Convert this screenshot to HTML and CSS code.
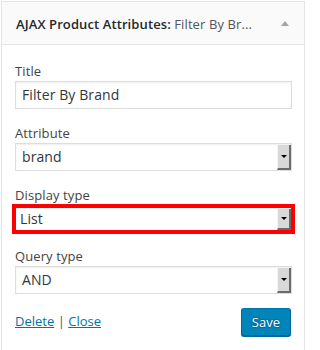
FILE: index.html
```html
<!DOCTYPE html>
<html>
<head>
<meta charset="utf-8">
<link rel="stylesheet" href="styles.css">
</head>
<body>
<div class="widget">
  <div class="widget-top">
    <h3 class="widget-title">AJAX Product Attributes<span class="colon">:</span> <span class="in-title">Filter By Br...</span></h3>
    <span class="toggle"></span>
  </div>
  <div class="widget-inside">
    <div class="field">
      <label class="label">Title</label>
      <div class="input">Filter By Brand</div>
    </div>
    <div class="field">
      <label class="label">Attribute</label>
      <div class="select"><span class="value">brand</span><span class="arrow"></span></div>
    </div>
    <div class="field">
      <label class="label">Display type</label>
      <div class="select highlight"><span class="value">List</span><span class="arrow"></span></div>
    </div>
    <div class="field">
      <label class="label">Query type</label>
      <div class="select"><span class="value">AND</span><span class="arrow"></span></div>
    </div>
    <div class="actions">
      <div class="links"><a href="#" class="link">Delete</a> <span class="sep">|</span> <a href="#" class="link">Close</a></div>
      <button class="save">Save</button>
    </div>
  </div>
</div>
</body>
</html>
```
FILE: styles.css
```css
html, body {
  margin: 0;
  padding: 0;
  background: #ffffff;
}
body {
  font-family: "Open Sans", "Liberation Sans", sans-serif;
  font-size: 13px;
  color: #444;
}
.widget {
  width: 302px;
  margin: 1px 0 0 1px;
  border: 1px solid #e5e5e5;
  border-bottom: none;
  box-shadow: 0 1px 1px rgba(0,0,0,.04);
  background: #fff;
  height: 360px;
}
.widget-top {
  height: 42px;
  background: #fafafa;
  border-bottom: 1px solid #e5e5e5;
  display: flex;
  align-items: center;
  justify-content: space-between;
  padding: 0 14px 0 14px;
}
.widget-title {
  margin: 0;
  font-size: 13px;
  font-weight: 600;
  color: #23282d;
  line-height: 18px;
  white-space: nowrap;
  letter-spacing: 0.1px;
  position: relative;
  top: 1px;
}
.in-title {
  font-weight: 400;
  color: #555;
}
.toggle {
  width: 0;
  height: 0;
  border-left: 4px solid transparent;
  border-right: 4px solid transparent;
  border-bottom: 5px solid #a0a5aa;
  margin-right: 1px;
}
.widget-inside {
  padding: 17px 12px 0 13px;
}
.field {
  display: flex;
  flex-direction: column;
  margin-bottom: 15px;
}
.label {
  line-height: 18px;
  margin-bottom: 1px;
  color: #444;
  letter-spacing: 0.1px;
}
.input {
  height: 28px;
  box-sizing: border-box;
  border: 1px solid #ddd;
  box-shadow: inset 0 1px 2px rgba(0,0,0,.07);
  font-size: 14px;
  line-height: 26px;
  padding: 0 6px;
  color: #32373c;
  letter-spacing: 0.1px;
}
.select {
  height: 28px;
  box-sizing: border-box;
  border: 1px solid #ddd;
  display: flex;
  align-items: stretch;
  box-shadow: inset 0 1px 2px rgba(0,0,0,.07);
}
.select.highlight {
  border: 4px solid #ff0000;
  height: 30px;
  margin: -1px -3px -2px -3px;
  padding: 0;
}
.select .value {
  flex: 1;
  font-size: 14px;
  line-height: 26px;
  padding: 0 6px;
  color: #32373c;
  letter-spacing: 0.1px;
}
.select.highlight .value {
  line-height: 22px;
  padding: 0 4px;
}
.arrow {
  width: 11px;
  margin: 1px 0 0 0;
  background: #d9d9d9;
  border-left: 1px solid #f4f4f4;
  border-right: 2px solid #6b6b6b;
  border-bottom: 2px solid #6b6b6b;
  position: relative;
}
.arrow::after {
  content: "";
  position: absolute;
  left: 3px;
  top: 50%;
  margin-top: -2px;
  border-left: 3px solid transparent;
  border-right: 3px solid transparent;
  border-top: 3px solid #000;
}
.actions {
  display: flex;
  justify-content: space-between;
  align-items: flex-start;
  margin-top: -1px;
}
.links {
  line-height: 18px;
  padding-top: 4px;
}
.link {
  color: #0073aa;
  text-decoration: underline;
}
.sep {
  color: #555;
}
.save {
  font-family: "Open Sans", "Liberation Sans", sans-serif;
  font-size: 13px;
  height: 28px;
  line-height: 26px;
  padding: 0 10px 2px;
  margin-right: 1px;
  background: #0085ba;
  border: 1px solid #0073aa;
  border-color: #0073aa #006799 #006799;
  border-radius: 3px;
  box-shadow: 0 1px 0 #006799;
  color: #fff;
  text-shadow: 0 -1px 1px #006799, 1px 0 1px #006799, 0 1px 1px #006799, -1px 0 1px #006799;
  cursor: pointer;
}
```
